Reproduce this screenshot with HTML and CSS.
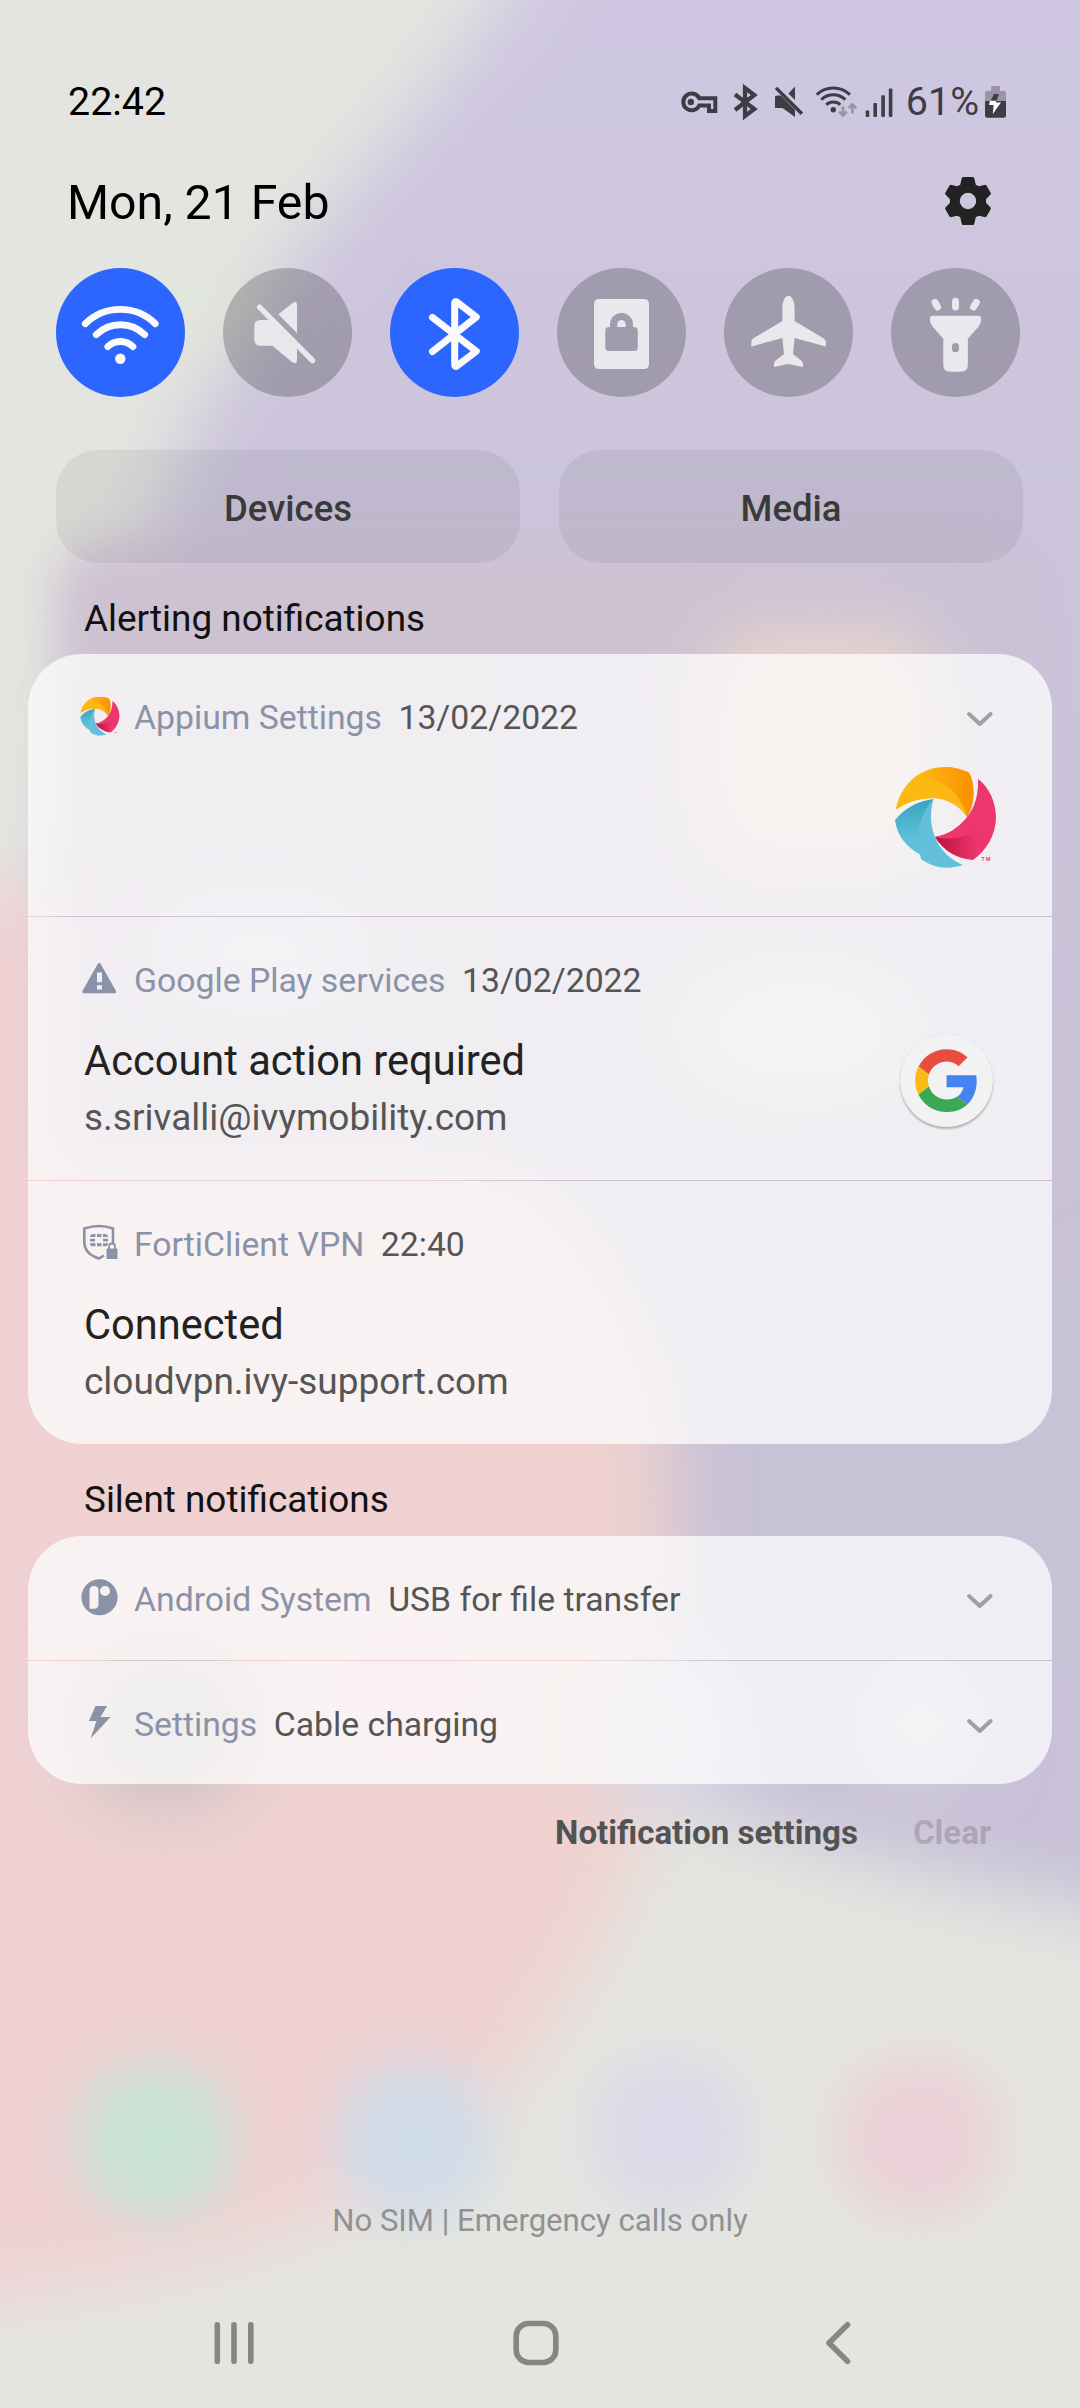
FILE: index.html
```
<!DOCTYPE html>
<html lang="en">
<head>
<meta charset="utf-8">
<title>Notification panel</title>
<link rel="stylesheet" href="styles.css">
</head>
<body>
<div class="phone">
  <svg class="wallpaper" viewBox="0 0 1080 2408" aria-hidden="true">
    <defs>
      <filter id="b40" x="-50%" y="-50%" width="200%" height="200%"><feGaussianBlur stdDeviation="36"/></filter>
      <filter id="b20" x="-50%" y="-50%" width="200%" height="200%"><feGaussianBlur stdDeviation="24"/></filter>
      <linearGradient id="violet" x1="0" y1="0" x2="0" y2="1">
        <stop offset="0" stop-color="#d0c8e3"/><stop offset=".25" stop-color="#ccc5dc"/><stop offset=".6" stop-color="#c9c2d7"/><stop offset="1" stop-color="#c8c1d8"/>
      </linearGradient>
      <linearGradient id="rose" x1="0" y1="0" x2="1" y2="0">
        <stop offset="0" stop-color="#f0d1d4"/><stop offset=".6" stop-color="#efd1d1"/><stop offset="1" stop-color="#efd2cf"/>
      </linearGradient>
      <linearGradient id="mauve" x1="0" y1="0" x2="1" y2="0">
        <stop offset="0" stop-color="#cec1d2"/><stop offset=".7" stop-color="#cec2d3"/><stop offset="1" stop-color="#cac2d7"/>
      </linearGradient>
    </defs>
    <rect width="1080" height="2408" fill="#e4e5e0"/>
    <path filter="url(#b40)" fill="url(#violet)" d="M560-100C470 60 355 170 275 280C215 370 190 430 150 520L60 900L400 1800L640 1775Q860 1875 1200 1925V-100Z"/>
    <path filter="url(#b40)" fill="url(#rose)" d="M-120 890L60 890C350 1040 650 1180 672 1480C680 1780 640 1880 565 2000C450 2200 250 2275-120 2310Z"/>
    <rect filter="url(#b20)" x="56" y="545" width="1000" height="625" rx="40" fill="url(#mauve)"/>
    <rect filter="url(#b40)" x="715" y="635" width="215" height="220" rx="40" fill="#ecd9ca"/>
    <g filter="url(#b40)">
      <circle cx="190" cy="300" r="40" fill="#dfe8d9"/>
      <ellipse cx="260" cy="950" rx="110" ry="40" fill="#d8d5e0"/>
      <ellipse cx="800" cy="1030" rx="110" ry="50" fill="#e0dcda"/>
      <ellipse cx="165" cy="1725" rx="85" ry="75" fill="#c4bfbe"/>
      <circle cx="405" cy="1690" r="50" fill="#f3c6d8"/>
      <circle cx="665" cy="1730" r="72" fill="#d9daea"/>
      <circle cx="920" cy="1725" r="52" fill="#dcd8e2"/>
    </g>
    <g filter="url(#b20)">
      <rect x="78" y="2063" width="156" height="156" rx="72" fill="#c9e2d6"/>
      <rect x="337" y="2062" width="156" height="156" rx="72" fill="#d1dce9"/>
      <rect x="590" y="2055" width="158" height="156" rx="72" fill="#dbdae8"/>
      <rect x="835" y="2058" width="166" height="160" rx="74" fill="#ebd2d8"/>
    </g>
  </svg>

  <header class="status">
    <span class="clock">22:42</span>
    <div class="status-icons">
      <svg width="330" height="40" viewBox="680 79 330 40">
        <g fill="none" stroke="#3e3c44" stroke-width="4">
          <path d="M699.3 95.3H715.3V108H709V102.5H699.3A8.4 8.4 0 1 1 699.3 95.3Z"/>
          <path stroke-width="4.2" d="M735 91.5L754.3 106L745 113V85L754.3 92L735 107"/>
        </g>
        <circle cx="690.8" cy="99" r="3.2" fill="#3e3c44"/>
        <g fill="#3e3c44">
          <path d="M788.5 90.5L795 83.5V97Z M775 93.5L777 92.5H781L795 107V114L782.5 105H775Z"/>
          <path d="M774.8 86L777.2 83.8L803.2 109.5L800.6 112Z"/>
          <circle cx="833.3" cy="106.7" r="2.7"/>
          <rect x="865.7" y="107.5" width="3.6" height="6.5" rx="1"/>
          <rect x="873.4" y="100" width="3.6" height="14" rx="1"/>
          <rect x="881.3" y="92.2" width="3.6" height="21.8" rx="1"/>
          <rect x="888.8" y="85.5" width="3.6" height="28.5" rx="1"/>
        </g>
        <g fill="none" stroke="#3e3c44" stroke-width="3">
          <path d="M816.7 91.6A24 24 0 0 1 849.9 91.6M821.3 96.6A17 17 0 0 1 845.3 96.6M826.3 101.8A10 10 0 0 1 840.3 101.8"/>
        </g>
        <path fill="none" stroke="#99929f" stroke-width="2.6" d="M843 103.5V112M839.2 108.6L843 112.4L846.8 108.6M852.4 110.5V102M848.6 105.2L852.4 101.4L856.2 105.2"/>
        <path fill="#9a94a6" d="M991 88V84.5Q991 83 992.5 83H998.5Q1000 83 1000 84.5V88H1004Q1006 88 1006 90V98H985V90Q985 88 987 88Z"/>
        <path fill="#3e3c44" d="M985 98H1006V112.5Q1006 114.7 1004 114.7H987Q985 114.7 985 112.5Z M994 91H999L996.5 98H990.5Z"/>
        <path fill="#fff" d="M990 97.8H996.5L995.8 99.5H1001L992.8 111L993.6 102H989Z"/>
      </svg>
      <span class="percent">61%</span>
    </div>
  </header>

  <div class="date-row">
    <h1 class="date">Mon, 21 Feb</h1>
    <svg class="gear" width="48" height="48" viewBox="-24 -24 48 48">
      <path fill="#222" fill-rule="evenodd" d="M-5-24H5Q6-24 6.3-22.5L7.8-16.2Q9.5-15 11.5-14.8L17-16.2Q18-16 18.5-15.4L22.8-8Q23-7 22.3-6.3L18.2-2Q17.8 0 18.2 2L22.3 6.3Q23 7 22.8 8L18.5 15.4Q18 16 17 16.2L11.5 14.8Q9.5 15 7.8 16.2L6.3 22.5Q6 24 5 24H-5Q-6 24-6.3 22.5L-7.8 16.2Q-9.5 15-11.5 14.8L-17 16.2Q-18 16-18.5 15.4L-22.8 8Q-23 7-22.3 6.3L-18.2 2Q-17.8 0-18.2-2L-22.3-6.3Q-23-7-22.8-8L-18.5-15.4Q-18-16-17-16.2L-11.5-14.8Q-9.5-15-7.8-16.2L-6.3-22.5Q-6-24-5-24ZM0-8.2A8.2 8.2 0 1 0 0 8.2A8.2 8.2 0 1 0 0-8.2Z"/>
    </svg>
  </div>

  <div class="tiles">
    <div class="tile on"><svg viewBox="0 0 129 129">
      <path fill="none" stroke="#fafafa" stroke-width="6.8" stroke-linecap="round" d="M29.3 55.7A50 50 0 0 1 99.3 55.7M40.2 66.7A34.5 34.5 0 0 1 88.7 66.7M51.8 78.6A18 18 0 0 1 76.9 78.6"/>
      <circle cx="64.3" cy="90.7" r="5.2" fill="#fafafa"/></svg></div>
    <div class="tile"><svg viewBox="0 0 129 129">
      <path fill="#e9e8ec" d="M55.3 46.3L70 34.8Q74 32.5 74 37V65.3ZM45.7 52H37.5Q31.3 52 31.3 58V71.5Q31.3 77.8 37.5 77.8H49.3L69.5 94.5Q74 96.5 74 92V80.6Z"/>
      <path stroke="#e9e8ec" stroke-width="5.4" stroke-linecap="round" d="M36.5 39.2L89.5 92.5"/></svg></div>
    <div class="tile on"><svg viewBox="0 0 129 129">
      <path fill="none" stroke="#fafafa" stroke-width="7" stroke-linecap="round" stroke-linejoin="round" d="M42.5 49.5L86.3 83.2L66.5 98.3Q64.7 98.8 64.7 97V35Q64.7 33 66.5 33.8L86.3 49L42.5 83.5"/></svg></div>
    <div class="tile"><svg viewBox="0 0 129 129">
      <path fill="#e9e8ec" fill-rule="evenodd" d="M42 31H87Q92 31 92 36V96Q92 101 87 101H42Q37 101 37 96V36Q37 31 42 31ZM53 59H52Q48.3 59 48.3 63V79.5Q48.3 83 52 83H77Q80.8 83 80.8 79.5V63Q80.8 59 77 59H76V56.5A11.5 11.5 0 0 0 53 56.5ZM60.3 59V56.2A4.2 4.2 0 0 1 68.7 56.2V59Z"/></svg></div>
    <div class="tile"><svg viewBox="0 0 129 129">
      <path fill="#e9e8ec" d="M64.4 27.7C68 27.7 70.6 33.5 70.6 40V53L99.8 70.5Q101.7 71.8 101.7 74V78.4L70.6 70L69 86L77.5 92.7Q79 94 79 96.5V98.9L64.4 96L50 98.9V96.5Q50 94 51.4 92.7L60 86L58.4 70L27.3 78.4V74Q27.3 71.8 29 70.5L58.4 53V40C58.4 33.5 60.8 27.7 64.4 27.7Z"/></svg></div>
    <div class="tile"><svg viewBox="0 0 129 129">
      <path fill="#e9e8ec" fill-rule="evenodd" d="M42 47.7H87Q90 47.7 90 50.5V52.5Q90 55.5 87.8 58.3L76.9 70.8V96.5Q76.9 103.7 70 103.7H59Q52.3 103.7 52.3 96.5V70.8L41.3 58.3Q39 55.5 39 52.5V50.5Q39 47.7 42 47.7ZM64.5 75Q61 75 61 78.5V81Q61 84.3 64.5 84.3Q68 84.3 68 81V78.5Q68 75 64.5 75Z"/>
      <path stroke="#e9e8ec" stroke-width="7" stroke-linecap="round" d="M44 34.5L46.6 39M64.5 33.2V38.9M85.3 34.5L82.6 39"/></svg></div>
  </div>

  <div class="quick-buttons">
    <button class="quick">Devices</button>
    <button class="quick">Media</button>
  </div>

  <h2 class="section">Alerting notifications</h2>
  <section class="card">
    <article class="row">
      <div class="head">
        <svg class="app-icon" viewBox="-0.5 1.5 103 103"><use href="#appium"/></svg>
        <span class="app">Appium Settings</span><span class="meta">13/02/2022</span>
        <svg class="chevron" viewBox="0 0 28 16"><path d="M3 3L13.8 13L24.6 3"/></svg>
      </div>
      <div class="body logo-only">
        <svg class="large" viewBox="0 0 102 102">
          <defs>
            <linearGradient id="y1" x1="0" x2="1"><stop offset=".3" stop-color="#fdb913"/><stop offset="1" stop-color="#fb8f00"/></linearGradient>
            <linearGradient id="c1" x1="0" y1="0" x2="0" y2="1"><stop offset="0" stop-color="#38a3bf"/><stop offset=".7" stop-color="#5fc0d8"/></linearGradient>
            <linearGradient id="p1" x1="0" x2="1"><stop offset="0" stop-color="#b8123c"/><stop offset=".7" stop-color="#ee366e"/></linearGradient>
            <g id="appium">
              <path fill="url(#y1)" d="M1 42.3C5 18 25 0 50 0C59 0 67 2 74 5.5Q79 14 78.7 28Q78 40 72.3 50.3Q60 32 38 31Q18 31 1 42.3Z"/>
              <path fill="#fdb913" d="M1 42.3C4 29 12 18 22 12C50 10 66 28 72.3 50.3Q60 32 38 31Q18 31 1 42.3Z"/>
              <path fill="url(#p1)" d="M40 70Q60 67 72.3 50.3L101 50C101 67 92 83 78 93C63 92 48 84 40 70Z"/>
              <path fill="#ee366e" d="M83 12C94 20 101 35 101 51Q99 58 94 55C80 67 61 75 40 70Q58 67 71 51.5Q84 36 83 12Z"/>
              <path fill="url(#c1)" d="M0 53Q15 35 38.6 32Q23 50 26 88Q3 76 0 53Z"/>
              <path fill="#62c0da" d="M38.6 32C30 60 43 88 68 98C53 103 38 101 26 92Q17 56 38.6 32Z"/>
              <text x="86.5" y="93.5" class="tm" textLength="9">TM</text>
            </g>
          </defs>
          <use href="#appium"/>
        </svg>
      </div>
    </article>
    <article class="row">
      <div class="head">
        <svg class="app-icon" viewBox="0 0 40 40"><path fill="#8a92a8" fill-rule="evenodd" d="M19 3Q20 3 20.7 4L36 31Q36.5 33.3 34.5 33.3H4Q2 33.3 2.4 31L17.7 4Q18.3 3 19 3ZM17 12.5V22.3H22V12.5ZM17 25.3V29.6H22V25.3Z"/></svg>
        <span class="app">Google Play services</span><span class="meta">13/02/2022</span>
      </div>
      <div class="body">
        <div class="texts">
          <h3 class="title">Account action required</h3>
          <p class="sub">s.srivalli@ivymobility.com</p>
        </div>
        <div class="badge"><svg viewBox="2 2 44 44">
          <path fill="#ea4d40" d="M24 9.5c3.54 0 6.71 1.22 9.21 3.6l6.85-6.85C35.9 2.38 30.47 0 24 0 14.62 0 6.51 5.38 2.56 13.22l7.98 6.19C12.43 13.72 17.74 9.5 24 9.5z" transform="translate(2.1 2.1) scale(.915)"/>
          <path fill="#4584f0" d="M46.98 24.55c0-1.57-.15-3.09-.38-4.55H24v9.02h12.94c-.58 2.96-2.26 5.48-4.78 7.18l7.73 6c4.51-4.18 7.09-10.36 7.09-17.65z" transform="translate(2.1 2.1) scale(.915)"/>
          <path fill="#f8bc15" d="M10.53 28.59c-.48-1.45-.76-2.99-.76-4.59s.27-3.14.76-4.59l-7.98-6.19C.92 16.46 0 20.12 0 24c0 3.88.92 7.54 2.56 10.78l7.97-6.19z" transform="translate(2.1 2.1) scale(.915)"/>
          <path fill="#39a857" d="M24 48c6.48 0 11.93-2.13 15.89-5.81l-7.73-6c-2.15 1.45-4.92 2.3-8.16 2.3-6.26 0-11.57-4.22-13.47-9.91l-7.98 6.19C6.51 42.62 14.62 48 24 48z" transform="translate(2.1 2.1) scale(.915)"/>
        </svg></div>
      </div>
    </article>
    <article class="row">
      <div class="head">
        <svg class="app-icon" viewBox="0 0 40 40">
          <path fill="none" stroke="#8a92a8" stroke-width="2.6" d="M33 19V4.5Q19 -.5 4.300 4.500V18Q4.500 30 19 34.500L24 31.500"/>
          <path fill="#8a92a8" d="M12 10H15.500V13H10V12ZM17 10H21.500V13H17ZM23 10H26L28 12V13H23ZM10 14.800H15V17.500H10ZM23 14.800H28V17.500H23ZM10 19.300H15.500V22.300H12L10 21ZM17 19.300H21.500V22.300H17ZM23 19.300H28V21L26 22.300H23ZM27.500 24.500H37.500V35H27Q26.500 35 26.500 34V25.500Q26.500 24.500 27.500 24.500Z"/>
          <path fill="none" stroke="#8a92a8" stroke-width="1.800" d="M29 25V22.500A3 3 0 0 1 35 22.500V25"/></svg>
        <span class="app">FortiClient VPN</span><span class="meta">22:40</span>
      </div>
      <div class="body">
        <div class="texts">
          <h3 class="title">Connected</h3>
          <p class="sub">cloudvpn.ivy-support.com</p>
        </div>
      </div>
    </article>
  </section>

  <h2 class="section second">Silent notifications</h2>
  <section class="card">
    <article class="row compact">
      <div class="head">
        <svg class="app-icon" viewBox="0 0 40 40"><path fill="#8a92a8" fill-rule="evenodd" d="M19.500.2A18 18 0 1 0 19.500 36.300A18 18 0 1 0 19.500.2ZM9.500 11.500Q9.500 7 14 7Q18.500 7 18.500 11.500V25Q18.500 29.700 14 29.700H9.500ZM25 7A5 5 0 1 1 25 17A5 5 0 1 1 25 7Z"/></svg>
        <span class="app">Android System</span><span class="meta">USB for file transfer</span>
        <svg class="chevron" viewBox="0 0 28 16"><path d="M3 3L13.800 13L24.600 3"/></svg>
      </div>
    </article>
    <article class="row compact">
      <div class="head">
        <svg class="app-icon" viewBox="0 0 40 40"><path fill="#8a92a8" d="M15.500 2H27L20.500 13H30.500L10.500 34.500L16.500 17H9Z"/></svg>
        <span class="app">Settings</span><span class="meta">Cable charging</span>
        <svg class="chevron" viewBox="0 0 28 16"><path d="M3 3L13.800 13L24.600 3"/></svg>
      </div>
    </article>
  </section>

  <div class="actions">
    <button class="action">Notification settings</button>
    <button class="action off">Clear</button>
  </div>

  <p class="carrier">No SIM | Emergency calls only</p>
  <nav class="nav">
    <svg viewBox="0 0 46 46"><path d="M6.300 4.800V41.200M23 4.800V41.200M39.800 4.800V41.200"/></svg>
    <svg viewBox="0 0 46 46"><rect x="3.200" y="3.500" width="39.600" height="39" rx="12.500"/></svg>
    <svg viewBox="0 0 46 46"><path d="M32.500 4.800L14 23L32.500 41.200"/></svg>
  </nav>
</div>
</body>
</html>
```
FILE: styles.css
```
* { box-sizing: border-box; }
body { margin: 0; font-family: Roboto, "Liberation Sans", sans-serif; }
h1, h2, h3, p { margin: 0; font-weight: 400; }
button { border: 0; padding: 0; background: none; font-family: inherit; }
svg { display: block; }

.phone {
  position: relative;
  isolation: isolate;
  display: flex;
  flex-direction: column;
  width: 1080px;
  height: 2408px;
  padding-top: 71px;
  overflow: hidden;
  background: #e4e5e0;
}
.wallpaper { position: absolute; inset: 0; z-index: -1; width: 1080px; height: 2408px; }

.status { display: flex; justify-content: space-between; height: 60px; padding: 0 70px 0 68px; font-size: 39.4px; line-height: 61px; color: #000; }
.status-icons { display: grid; align-items: center; }
.status-icons > * { grid-area: 1 / 1; }
.percent { justify-self: end; margin-right: 31px; color: #3e3c44; }

.date-row { display: flex; align-items: center; justify-content: space-between; height: 60px; margin-top: 42px; padding: 0 88px 0 67px; }
.date { font-size: 48.2px; line-height: 60px; color: #000; }
.gear { margin-top: -4px; }

.tiles { display: flex; gap: 38px; margin-top: 35px; padding-left: 56px; }
.tile { width: 129px; height: 129px; border-radius: 50%; background: rgba(0, 0, 0, .21); }
.tile.on { background: #2d66ff; }

.quick-buttons { display: flex; gap: 39px; margin-top: 53px; padding: 0 57px 0 56px; }
.quick { flex: 1; height: 113px; padding-top: 4px; border-radius: 42px; background: rgba(0, 0, 0, .06); font-size: 36.5px; font-weight: 500; color: #3a3a3a; }

.section { margin: 34px 0 13px 84px; font-size: 36.9px; line-height: 44px; color: #111; }
.section.second { margin-bottom: 14px; }

.card { display: flex; flex-direction: column; gap: 1px; margin: 0 28px; border-radius: 54px; overflow: hidden; }
.row { height: 263px; padding: 43px 55px 0 52px; background: rgba(252, 252, 252, .76); }
.row:first-child { height: 262px; }
.row.compact { height: 124px; }
.row.compact:last-child { height: 123px; }
.head { display: flex; align-items: center; height: 40px; font-size: 33.75px; line-height: 42px; }
.app-icon { flex: none; width: 40px; height: 40px; margin-right: 14px; }
.app { margin-right: 16.5px; padding-top: 1px; color: #8a92a8; }
.meta { padding-top: 1px; color: #555; }
.chevron { width: 28px; height: 16px; margin: 3px 3px 0 auto; fill: none; stroke: #a0a0a0; stroke-width: 4; stroke-linecap: round; stroke-linejoin: round; }
.body { display: flex; justify-content: space-between; padding-left: 4px; }
.body.logo-only { justify-content: flex-end; padding-top: 30px; }
.large { width: 102px; height: 102px; }
.tm { font: 700 5px Roboto, sans-serif; fill: #ee366e; }
.title { margin-top: 35px; font-size: 41.6px; line-height: 52px; color: #222; }
.sub { margin-top: 9px; font-size: 37px; line-height: 44px; color: #555; }
.badge { display: flex; align-items: center; justify-content: center; width: 93px; height: 93px; margin: 34px 4px 0 0; border-radius: 50%; background: #f2f2f2; box-shadow: 0 2px 2px rgba(0, 0, 0, .26), 0 0 1px rgba(0, 0, 0, .12); }
.badge svg { width: 63px; height: 63px; }

.actions { display: flex; justify-content: flex-end; gap: 55px; margin-top: 28px; padding-right: 89px; }
.action { font-size: 33.1px; font-weight: 700; line-height: 41px; color: #535353; }
.action.off { color: rgba(0, 0, 0, .18); }

.carrier { margin: auto 0 37px; text-align: center; font-size: 31.1px; line-height: 40px; color: #909193; }
.nav { display: flex; justify-content: space-between; align-items: center; height: 130px; padding: 0 219px 0 211px; }
.nav svg { width: 46px; height: 46px; fill: none; stroke: #868683; stroke-width: 5.6; stroke-linecap: round; stroke-linejoin: round; }
```
